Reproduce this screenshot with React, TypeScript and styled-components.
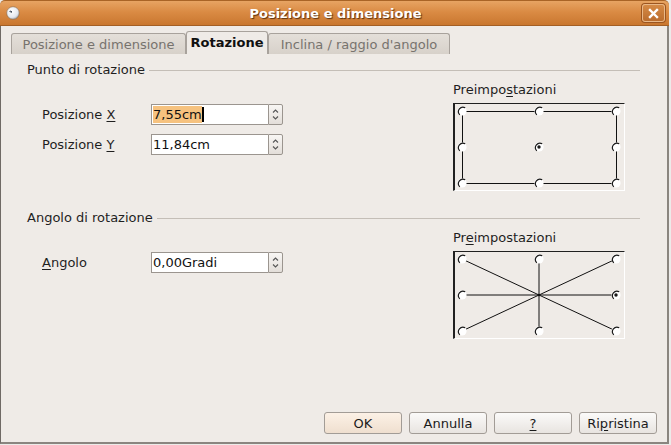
import React from "react";
import styled, { createGlobalStyle } from "styled-components";

const Global = createGlobalStyle`
  html, body { margin: 0; padding: 0; background: #ecebe9; }
  body {
    font-family: "DejaVu Sans", "Liberation Sans", sans-serif;
    font-size: 13px;
    color: #1a1a1a;
  }
`;

const Window = styled.div`
  width: 669px;
  height: 444px;
  display: flex;
  flex-direction: column;
`;

const TitleBar = styled.div`
  height: 26px;
  flex: none;
  box-sizing: border-box;
  display: grid;
  grid-template-columns: 1fr auto 1fr;
  align-items: center;
  padding: 0 4px 0 6px;
  border-top: 1px solid #a96426;
  border-radius: 5px 5px 0 0;
  background: linear-gradient(#e7a463, #da8b44 45%, #c9772f 100%);
  border-bottom: 1px solid #a35f25;
`;

const AppIcon = styled.svg`
  justify-self: start;
  width: 14px;
  height: 14px;
`;

const Title = styled.div`
  color: #ffffff;
  font-weight: bold;
  font-size: 13px;
  text-shadow: 1px 1px 1px #5a3110;
  white-space: nowrap;
`;

const CloseBtn = styled.div`
  justify-self: end;
  width: 23px;
  height: 18px;
  box-sizing: border-box;
  border: 1px solid #e9b888;
  border-radius: 3px;
  background: linear-gradient(#d58a46, #bb6d2e);
  box-shadow: 0 0 0 1px #9b5520;
  display: flex;
  align-items: center;
  justify-content: center;
`;

const Body = styled.div`
  flex: 1;
  display: flex;
  flex-direction: column;
  background: #efebe7;
  border-left: 1px solid #6f6a65;
  border-right: 2px solid #8a857f;
  border-bottom: 2px solid #8a857f;
  padding: 5px 10px 8px 10px;
`;

const TabStrip = styled.div`
  display: flex;
  align-items: flex-end;
  height: 23px;
`;

const Tab = styled.div<{ $active?: boolean; $w: number }>`
  width: ${(p) => p.$w}px;
  height: ${(p) => (p.$active ? 23 : 21)}px;
  box-sizing: border-box;
  display: flex;
  align-items: center;
  justify-content: center;
  padding-bottom: ${(p) => (p.$active ? 1 : 0)}px;
  border: 1px solid #a8a29c;
  border-bottom: none;
  border-radius: 3px 3px 0 0;
  background: ${(p) =>
    p.$active ? "#efebe7" : "linear-gradient(#e4dfd9, #d7d1ca)"};
  color: ${(p) => (p.$active ? "#101010" : "#77736e")};
  font-weight: ${(p) => (p.$active ? "bold" : "normal")};
  white-space: nowrap;
`;

const Page = styled.div`
  padding: 8px 17px 0 16px;
  display: flex;
  flex-direction: column;
  gap: 19px;
`;

const Section = styled.div`
  display: flex;
  flex-direction: column;
`;

const Header = styled.div`
  display: flex;
  align-items: center;
  line-height: 16px;
  height: 16px;
  color: #1f1f1f;
  &::after {
    content: "";
    flex: 1;
    margin-left: 4px;
    border-top: 1px solid #c4beb7;
    margin-top: 1px;
  }
`;

const SectionGrid = styled.div`
  display: grid;
  grid-template-columns: 1fr 172px;
  grid-template-rows: auto auto;
  padding-right: 15px;
  margin-top: 4px;
`;

const Fields = styled.div`
  grid-column: 1;
  grid-row: 2;
  padding-left: 15px;
  padding-top: 1px;
  display: flex;
  flex-direction: column;
  gap: 9px;
`;

const FieldRow = styled.div`
  display: flex;
  align-items: center;
  height: 21px;
`;

const FieldLabel = styled.div`
  width: 109px;
  line-height: 16px;
  color: #1f1f1f;
`;

const Mn = styled.span`
  text-decoration: underline;
  text-underline-offset: 2px;
`;

const Input = styled.div`
  width: 117px;
  height: 21px;
  box-sizing: border-box;
  border: 1px solid #9b958f;
  border-right: none;
  background: #ffffff;
  display: flex;
  align-items: center;
  padding-left: 1px;
  color: #111;
  white-space: nowrap;
`;

const Selected = styled.span`
  background: #f6c27f;
  line-height: 17px;
`;

const Caret = styled.span`
  display: inline-block;
  width: 2px;
  height: 15px;
  background: #000;
`;

const SpinBtn = styled.div`
  width: 15px;
  height: 21px;
  box-sizing: border-box;
  border: 1px solid #9b958f;
  border-radius: 0 2px 2px 0;
  background: linear-gradient(#f8f6f4, #e3ded9);
  display: flex;
  align-items: center;
  justify-content: center;
`;

const PresetLabel = styled.div`
  grid-column: 2;
  grid-row: 1;
  line-height: 16px;
  margin-bottom: 5px;
  color: #1f1f1f;
`;

const PresetBox = styled.div`
  grid-column: 2;
  grid-row: 2;
  width: 172px;
  height: 88px;
  box-sizing: border-box;
  border-top: 1px solid #202020;
  border-left: 2px solid #202020;
  border-right: 1px solid #ffffff;
  border-bottom: 1px solid #ffffff;
  background: #efebe7;
`;

const PresetSvg = styled.svg`
  display: block;
`;

const Buttons = styled.div`
  margin-top: auto;
  display: flex;
  justify-content: flex-end;
  gap: 7px;
`;

const Button = styled.div<{ $default?: boolean }>`
  width: 78px;
  height: 22px;
  box-sizing: border-box;
  border: 1px solid #a29c96;
  border-radius: 3px;
  background: ${(p) =>
    p.$default
      ? "linear-gradient(#fcf1e6, #efdfcf)"
      : "linear-gradient(#fbfaf9, #e8e4e0)"};
  display: flex;
  align-items: center;
  justify-content: center;
  color: #1a1a1a;
`;

const XS = [7, 84, 161];
const YS = [7, 43, 79];

function Radio({ x, y, sel }: { x: number; y: number; sel?: boolean }) {
  return (
    <g>
      <circle cx={x} cy={y} r={4.6} fill="#ffffff" />
      <path
        d={`M ${x - 2.2} ${y + 3.9} A 4.5 4.5 0 0 1 ${x + 3.2} ${y - 3.2}`}
        stroke="#1a1a1a"
        strokeWidth={1.2}
        fill="none"
      />
      {sel && <circle cx={x} cy={y} r={1.7} fill="#1a1a1a" />}
    </g>
  );
}

function Preset({ mode }: { mode: "rect" | "star" }) {
  const cx = XS[1];
  const cy = YS[1];
  const pts: [number, number][] = [];
  YS.forEach((y) => XS.forEach((x) => pts.push([x, y])));
  return (
    <PresetSvg width={169} height={86} viewBox="0 0 169 86">
      {mode === "rect" ? (
        <rect
          x={XS[0] + 0.5}
          y={YS[0] + 0.5}
          width={XS[2] - XS[0]}
          height={YS[2] - YS[0]}
          fill="none"
          stroke="#111"
          strokeWidth={1}
        />
      ) : (
        pts
          .filter(([x, y]) => !(x === cx && y === cy))
          .map(([x, y], i) => (
            <line key={i} x1={cx} y1={cy} x2={x} y2={y} stroke="#111" strokeWidth={1} />
          ))
      )}
      {pts.map(([x, y], i) => {
        if (mode === "star" && x === cx && y === cy) return null;
        const sel =
          mode === "rect" ? x === cx && y === cy : x === XS[2] && y === cy;
        return <Radio key={i} x={x} y={y} sel={sel} />;
      })}
      {mode === "star" && <circle cx={cx} cy={cy} r={1.3} fill="#111" />}
    </PresetSvg>
  );
}

function Chevrons() {
  return (
    <svg width="7" height="15" viewBox="0 0 7 15">
      <path d="M1 5.5 L3.5 3 L6 5.5" stroke="#555" strokeWidth="1.1" fill="none" />
      <path d="M1 9.5 L3.5 12 L6 9.5" stroke="#555" strokeWidth="1.1" fill="none" />
    </svg>
  );
}

function SpinField({ children }: { children: React.ReactNode }) {
  return (
    <>
      <Input>{children}</Input>
      <SpinBtn>
        <Chevrons />
      </SpinBtn>
    </>
  );
}

export default function App() {
  return (
    <>
      <Global />
      <Window>
        <TitleBar>
          <AppIcon viewBox="0 0 14 14">
            <defs>
              <radialGradient id="ig" cx="0.4" cy="0.35" r="0.7">
                <stop offset="0" stopColor="#ffffff" />
                <stop offset="0.7" stopColor="#e4e8ee" />
                <stop offset="1" stopColor="#9aa3ad" />
              </radialGradient>
            </defs>
            <circle cx="7" cy="7" r="6.3" fill="url(#ig)" stroke="#8a6a4a" strokeWidth="0.6" />
            <path d="M3.5 5.5 L6 6.2 L4.6 4.8" stroke="#33404e" strokeWidth="1" fill="none" />
          </AppIcon>
          <Title>Posizione e dimensione</Title>
          <CloseBtn>
            <svg width="11" height="11" viewBox="0 0 11 11">
              <path
                d="M2 2 L9 9 M9 2 L2 9"
                stroke="#ffffff"
                strokeWidth="2.4"
                strokeLinecap="square"
              />
            </svg>
          </CloseBtn>
        </TitleBar>
        <Body>
          <TabStrip>
            <Tab $w={175}>Posizione e dimensione</Tab>
            <Tab $w={82} $active>
              Rotazione
            </Tab>
            <Tab $w={182}>Inclina / raggio d'angolo</Tab>
          </TabStrip>
          <Page>
            <Section>
              <Header>Punto di rotazione</Header>
              <SectionGrid>
                <PresetLabel>
                  Preimpo<Mn>s</Mn>tazioni
                </PresetLabel>
                <Fields>
                  <FieldRow>
                    <FieldLabel>
                      Posizione <Mn>X</Mn>
                    </FieldLabel>
                    <SpinField>
                      <Selected>7,55cm</Selected>
                      <Caret />
                    </SpinField>
                  </FieldRow>
                  <FieldRow>
                    <FieldLabel>
                      Posizione <Mn>Y</Mn>
                    </FieldLabel>
                    <SpinField>11,84cm</SpinField>
                  </FieldRow>
                </Fields>
                <PresetBox>
                  <Preset mode="rect" />
                </PresetBox>
              </SectionGrid>
            </Section>
            <Section>
              <Header>Angolo di rotazione</Header>
              <SectionGrid>
                <PresetLabel>
                  Pr<Mn>e</Mn>impostazioni
                </PresetLabel>
                <Fields>
                  <FieldRow>
                    <FieldLabel>
                      <Mn>A</Mn>ngolo
                    </FieldLabel>
                    <SpinField>0,00Gradi</SpinField>
                  </FieldRow>
                </Fields>
                <PresetBox>
                  <Preset mode="star" />
                </PresetBox>
              </SectionGrid>
            </Section>
          </Page>
          <Buttons>
            <Button $default>OK</Button>
            <Button>Annulla</Button>
            <Button>
              <Mn>?</Mn>
            </Button>
            <Button>
              Ri<Mn>p</Mn>ristina
            </Button>
          </Buttons>
        </Body>
      </Window>
    </>
  );
}
